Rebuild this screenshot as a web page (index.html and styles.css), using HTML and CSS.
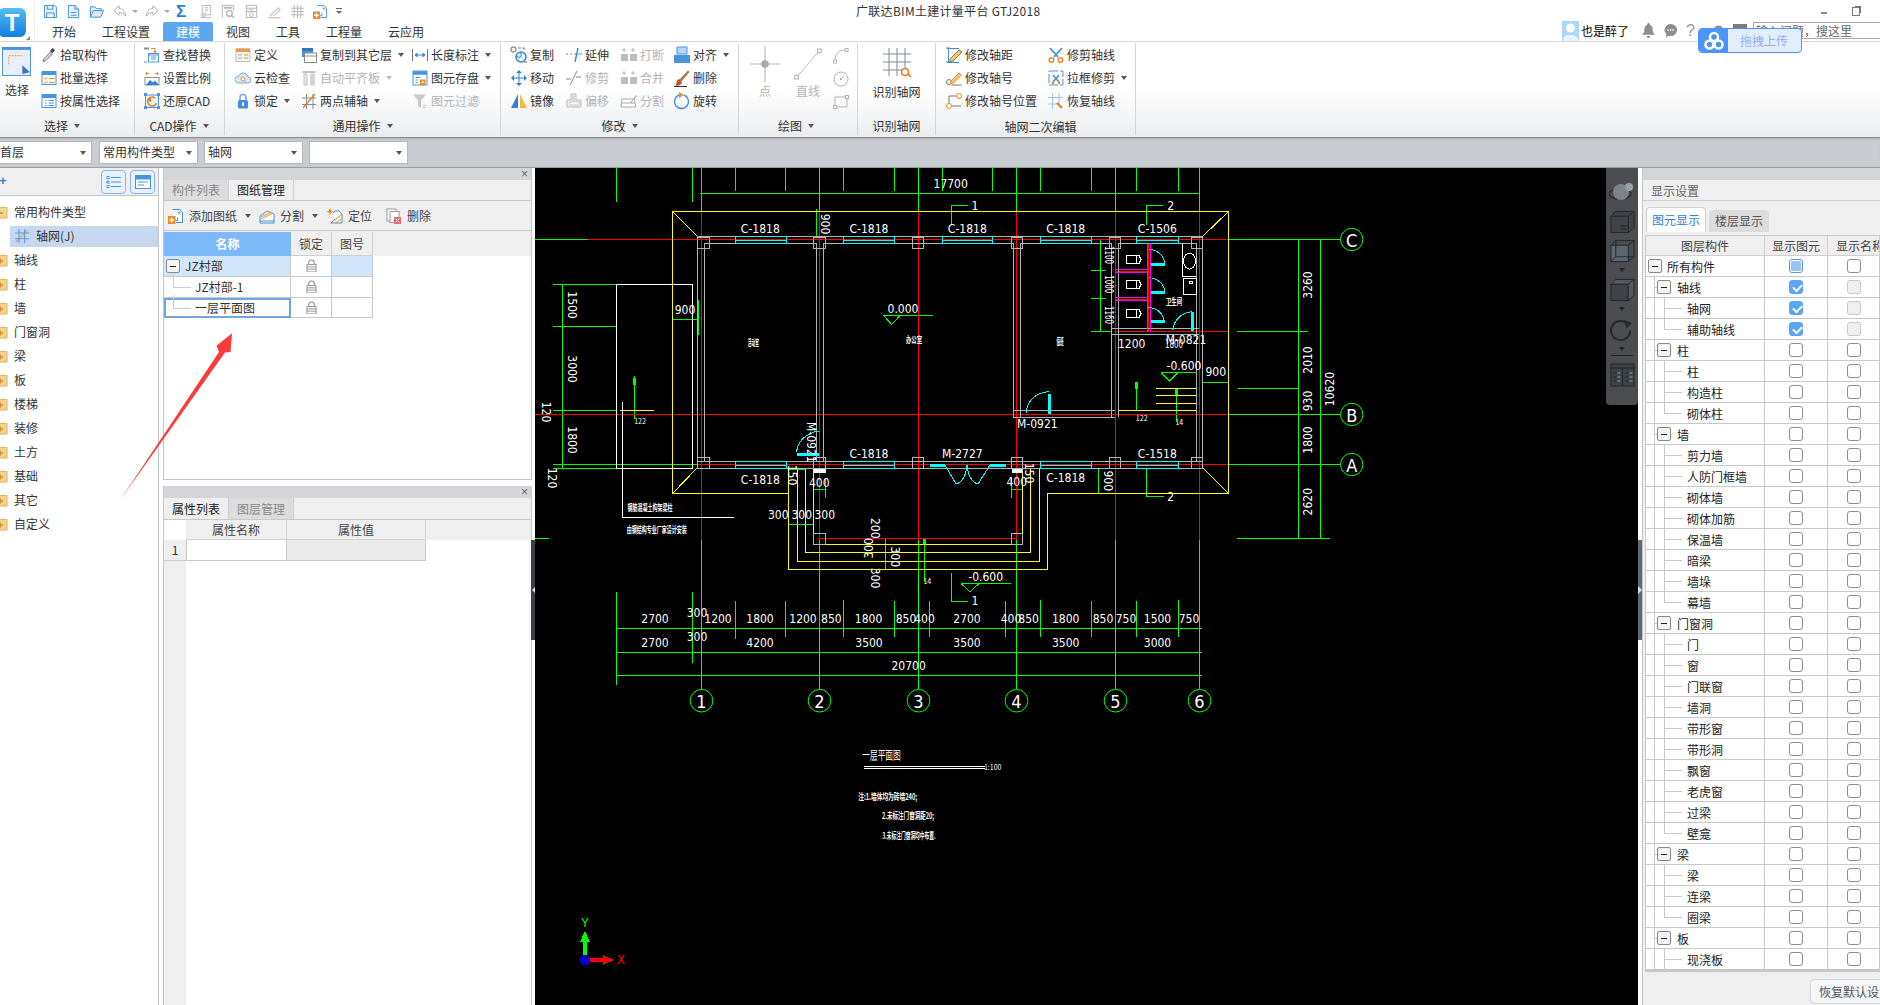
FILE: index.html
```html
<!DOCTYPE html>
<html lang="zh-CN">
<head>
<meta charset="utf-8">
<title>广联达BIM土建计量平台 GTJ2018</title>
<link rel="stylesheet" href="styles.css">
</head>
<body>
<svg class="sprite" aria-hidden="true">
<symbol id="save" viewBox="0 0 16 16"><path d="M1.5 1.5h11l2 2v11h-13z" fill="#e6f1fb" stroke="#3f8fd8"/><path d="M4.5 1.5v4h6v-4M4 14.5v-5h8v5" fill="none" stroke="#3f8fd8"/></symbol>
<symbol id="doc" viewBox="0 0 16 16"><path d="M2.500 1.500h7l4 4v9h-11z" fill="#e6f1fb" stroke="#3f8fd8"/><path d="M9.500 1.500v4h4M5 9h6M5 12h6" fill="none" stroke="#3f8fd8"/></symbol>
<symbol id="open" viewBox="0 0 16 16"><path d="M1.500 14V3h5l1.500 2h5v2" fill="#e6f1fb" stroke="#3f8fd8"/><path d="M1.500 14l3-7h11l-3 7z" fill="#dcebf9" stroke="#3f8fd8"/></symbol>
<symbol id="undo" viewBox="0 0 16 16"><path d="M7 2L1.500 7 7 12V9c3 0 5 1 7 4 0-5-3-8-7-8.500z" fill="#fff" stroke="#a8a8a8"/></symbol>
<symbol id="redo" viewBox="0 0 16 16"><path d="M9 2l5.500 5L9 12V9c-3 0-5 1-7 4 0-5 3-8 7-8.500z" fill="#fff" stroke="#a8a8a8"/></symbol>
<symbol id="g1" viewBox="0 0 16 16"><path d="M2.500 14.500h11M4.500 14V1.500h9v10h-7" fill="none" stroke="#b5b5b5"/><path d="M7 4h4M7 6.500h4M7 9h2" stroke="#b5b5b5"/><circle cx="6" cy="12" r="2.500" fill="#ccc"/></symbol>
<symbol id="g2" viewBox="0 0 16 16"><path d="M1.500 14.500v-13h12v6" fill="none" stroke="#b5b5b5"/><path d="M3 4h9" stroke="#b5b5b5" stroke-width="2"/><circle cx="9" cy="10" r="3" fill="none" stroke="#b5b5b5" stroke-width="1.500"/><path d="M11 12l3 3" stroke="#b5b5b5" stroke-width="1.500"/></symbol>
<symbol id="g3" viewBox="0 0 16 16"><path d="M2.500 14.500v-13h11v13z" fill="none" stroke="#b5b5b5"/><path d="M2 4.500h12M2 8h12M5 6.200h5" stroke="#b5b5b5"/><circle cx="8" cy="11.500" r="2" fill="none" stroke="#b5b5b5"/></symbol>
<symbol id="g4" viewBox="0 0 16 16"><path d="M1.500 14.500h13M3 13l9-9 2 2-7 7" fill="none" stroke="#c4c4c4" stroke-width="1.200"/></symbol>
<symbol id="g5" viewBox="0 0 16 16"><path d="M1 4.500h14M1 8h14M1 11.500h14M4.500 1v14M8 1v14M11.500 1v14" stroke="#b5b5b5"/></symbol>
<symbol id="addf" viewBox="0 0 16 16"><path d="M4.500 1.500h7l3 3v10H8" fill="#fff" stroke="#3f8fd8"/><path d="M10 4.500h2v2M6.500 12.500h3v-3" fill="none" stroke="#3f8fd8"/><rect x="0" y="8" width="7.500" height="8" fill="#ef8a22"/><path d="M3.750 9.500v5M1.300 12h5" stroke="#fff" stroke-width="1.400"/></symbol>
<symbol id="pick" viewBox="0 0 16 16"><path d="M2 14.500l1-3 6-6 2 2-6 6z" fill="#d8d8d8" stroke="#777"/><path d="M9 4l2-2.500c1-1 3.500 1.500 2.500 2.500L11 6.500z" fill="#4b4b4b"/></symbol>
<symbol id="batch" viewBox="0 0 16 16"><rect x="1" y="1.500" width="14" height="13" fill="#fff" stroke="#4a93df"/><path d="M1 3.500h14" stroke="#4a93df" stroke-width="3"/><path d="M3 8l1.200 1.200L6.500 7M3 12l1.200 1.200L6.500 11" fill="none" stroke="#ef8a22"/><path d="M8 8.500h5.500M8 12.500h5.500" stroke="#ef8a22"/></symbol>
<symbol id="attr" viewBox="0 0 16 16"><rect x="1" y="1.500" width="14" height="13" fill="#fff" stroke="#4a93df"/><path d="M1 3.500h14" stroke="#4a93df" stroke-width="3"/><path d="M4 7.500h1.500M4 10h1.500M4 12.500h1.500M7.500 7.500H13M7.500 10H13M7.500 12.500H13" stroke="#4a93df"/></symbol>
<symbol id="find" viewBox="0 0 16 16"><path d="M0 1.500h5" stroke="#8c8c8c" stroke-width="2"/><path d="M7 1.500h4v3" fill="none" stroke="#ef8a22"/><path d="M11 6.500L9 4h4z" fill="#ef8a22"/><rect x="4.500" y="6.500" width="10" height="8.500" fill="#fff" stroke="#4a93df"/><path d="M4.500 8h10M7 10h5M7 12h5" stroke="#4a93df"/><path d="M0 15h3" stroke="#8c8c8c"/></symbol>
<symbol id="scale" viewBox="0 0 16 16"><path d="M1 3.500l2-2v4zM15 3.500l-2-2v4z" fill="#ef8a22"/><path d="M3 3.500h2M11 3.500h2" stroke="#ef8a22"/><rect x="1" y="7.500" width="14" height="7.500" fill="#fff" stroke="#8c8c8c"/><path d="M2 15l4-5 3 2.500 2-2 4 4.500z" fill="#2f82d6"/></symbol>
<symbol id="restore" viewBox="0 0 16 16"><rect x="1.500" y="2" width="13" height="12.500" fill="#eaf3fc" stroke="#4a93df"/><path d="M0 0h3v3H0zM13 0h3v3h-3zM0 13h3v3H0zM13 13h3v3h-3z" fill="#4a93df"/><path d="M11 5a4.500 4.500 0 1 0 1.500 5" fill="none" stroke="#e9761a" stroke-width="1.500"/><path d="M3.500 7l3.500-3v5z" fill="#e9761a"/></symbol>
<symbol id="define" viewBox="0 0 16 16"><rect x="1" y="1.500" width="14" height="13" fill="#f3f3f3" stroke="#c2c2c2"/><path d="M1 3.500h14" stroke="#ef9a3c" stroke-width="3"/><path d="M3 8h4M3 11h4" stroke="#a7a7a7"/><path d="M9 8h4M9 11h4" stroke="#ef8a22"/></symbol>
<symbol id="cloud" viewBox="0 0 16 16"><path d="M4 13a3.500 3.500 0 0 1-.5-7 5 5 0 0 1 9.500 1 3 3 0 0 1 0 6z" fill="#dbeafa" stroke="#73aee8"/><circle cx="8" cy="9" r="2" fill="#fff" stroke="#ef8a22"/><path d="M9.500 10.500l2 2" stroke="#ef8a22"/></symbol>
<symbol id="lock" viewBox="0 0 16 16"><path d="M5 7V4.500a3 3 0 0 1 6 0V7" fill="none" stroke="#7aa9de" stroke-width="1.500"/><rect x="3" y="7" width="10" height="8.500" rx="1.500" fill="#3d8ee0"/><rect x="7" y="9.500" width="2" height="3.500" fill="#fff"/></symbol>
<symbol id="cfloor" viewBox="0 0 16 16"><rect x="1" y="1" width="11" height="9" fill="#4a93df"/><rect x="1" y="1" width="11" height="3" fill="#2f77c4"/><rect x="3.500" y="6" width="12" height="9.500" fill="#fff" stroke="#8c8c8c"/><path d="M3.500 9h12" stroke="#8c8c8c"/></symbol>
<symbol id="flat" viewBox="0 0 16 16"><path d="M1.500 2h13" stroke="#c4c4c4" stroke-width="2"/><rect x="3" y="4" width="3" height="11" fill="#e8e8e8" stroke="#c4c4c4"/><rect x="9" y="3.500" width="5" height="12" fill="#d5d5d5"/></symbol>
<symbol id="twop" viewBox="0 0 16 16"><path d="M5.500 1v15M12 1v15M1 5h14M1 11.500h14" stroke="#8c8c8c"/><path d="M2 15L14 1" stroke="#e9761a" stroke-width="1.200"/></symbol>
<symbol id="lenm" viewBox="0 0 16 16"><path d="M.5 2v12M15.500 2v12" stroke="#777"/><path d="M3 8h10" stroke="#2f82d6"/><path d="M2.500 8l3-2.500v5zM13.500 8l-3-2.500v5z" fill="#2f82d6"/></symbol>
<symbol id="saveb" viewBox="0 0 16 16"><rect x="1" y="1" width="14" height="14" fill="#fff" stroke="#4a93df"/><path d="M1 3h14" stroke="#4a93df" stroke-width="3.500"/><path d="M3.500 7.500h5M3.500 10h2M3.500 12.500h2" stroke="#4a93df"/><rect x="8" y="9.500" width="5.500" height="5.500" fill="#ef8a22"/><rect x="9.500" y="11.500" width="2.500" height="1.500" fill="#fff"/></symbol>
<symbol id="filt" viewBox="0 0 16 16"><path d="M1 1.500h13L9 7.500V15l-3-2V7.500z" fill="#c9c9c9"/><path d="M11 12.500h3M11 14.500h3" stroke="#c9c9c9"/></symbol>
<symbol id="copy" viewBox="0 0 18 18"><rect x="1" y="1" width="5" height="5" rx="2" fill="#fff" stroke="#666"/><path d="M8 2h3M12 2h2v2" fill="none" stroke="#888" stroke-width="1.200"/><circle cx="11" cy="11" r="5" fill="#fff" stroke="#2f82d6" stroke-width="1.500"/><circle cx="9" cy="9" r="2.500" fill="#cfe3f8" stroke="#2f82d6"/><path d="M14 16h3" stroke="#666"/></symbol>
<symbol id="extend" viewBox="0 0 18 18"><path d="M1 8h2M5 8h2M9 8h2" stroke="#888"/><path d="M13 2l-3 14" stroke="#2f82d6" stroke-width="1.300"/><path d="M13 8h4" stroke="#888"/></symbol>
<symbol id="brk" viewBox="0 0 18 18"><path d="M4 2v4M2 4h4M13 2v4M11 4h4" stroke="#bbb"/><rect x="1" y="8" width="7" height="7" fill="#bdbdbd"/><rect x="10" y="8" width="7" height="7" fill="#bdbdbd"/></symbol>
<symbol id="move" viewBox="0 0 18 18"><path d="M9 1l3 3H6zM9 17l-3-3h6zM1 9l3-3v6zM17 9l-3 3V6z" fill="#2f82d6"/><path d="M9 3v12M3 9h12" stroke="#2f82d6"/></symbol>
<symbol id="trim" viewBox="0 0 18 18"><path d="M1 10h5M11 8h5" stroke="#888"/><path d="M5 16L12 2" stroke="#888"/></symbol>
<symbol id="mir" viewBox="0 0 18 18"><path d="M8 2v14H1z" fill="#2f82d6"/><path d="M10 2v14h7z" fill="#f5b93a"/></symbol>
<symbol id="offs" viewBox="0 0 18 18"><path d="M6 2h5v6h5v7H2V8h4z" fill="#eee" stroke="#bbb"/><path d="M8 4h1v6h5v3H5v-3h3z" fill="#fff" stroke="#c8c8c8"/></symbol>
<symbol id="splt" viewBox="0 0 18 18"><path d="M1 15l1-8h12l2 8z" fill="#fff" stroke="#aaa"/><path d="M1 11h14" stroke="#aaa"/><path d="M10 11l6-8 1 1-6 7z" fill="#aaa"/></symbol>
<symbol id="algn" viewBox="0 0 18 18"><rect x="4" y="1" width="10" height="7" fill="#b9d6f5" stroke="#4a93df"/><rect x="1" y="9" width="16" height="8" fill="#4a93df"/></symbol>
<symbol id="del" viewBox="0 0 18 18"><path d="M6 11L15 1.500l1.500 1.500L8 13z" fill="#a9783a"/><path d="M2 17c2-1 1-6 4-7l3 4c-1 2-4 3-7 3z" fill="#c4502a"/><path d="M1 17.500h13" stroke="#333"/></symbol>
<symbol id="rot" viewBox="0 0 18 18"><path d="M11 3a7 7 0 1 1-5 0" fill="none" stroke="#3f8fd8" stroke-width="1.400"/><path d="M6 0l5 3-5 3z" fill="#ef8a22"/></symbol>
<symbol id="pt" viewBox="0 0 30 36"><path d="M15 0v36M0 18h30" stroke="#b3b3b3"/><circle cx="15" cy="18" r="3.800" fill="#a8a8a8"/></symbol>
<symbol id="ln" viewBox="0 0 32 36"><rect x="2" y="30" width="4" height="4" fill="#fff" stroke="#aaa"/><rect x="26" y="2" width="4" height="4" fill="#fff" stroke="#aaa"/><path d="M5 31L27 5" stroke="#b3b3b3"/></symbol>
<symbol id="arc" viewBox="0 0 16 16"><rect x=".5" y="12" width="3" height="3" fill="#fff" stroke="#b3b3b3"/><rect x="12" y=".5" width="3" height="3" fill="#fff" stroke="#b3b3b3"/><path d="M2 12C2 6 6 2 12 2" fill="none" stroke="#b3b3b3"/></symbol>
<symbol id="cir" viewBox="0 0 16 16"><circle cx="8" cy="8" r="7" fill="#fff" stroke="#b3b3b3"/><path d="M8 8l3-3" stroke="#b3b3b3"/><rect x="7" y="7" width="2" height="2" fill="#b3b3b3"/></symbol>
<symbol id="rc" viewBox="0 0 16 16"><path d="M2 3h12v10H2z" fill="none" stroke="#b3b3b3"/><rect x=".5" y="11.500" width="3" height="3" fill="#fff" stroke="#b3b3b3"/><rect x="12.500" y="1.500" width="3" height="3" fill="#fff" stroke="#b3b3b3"/></symbol>
<symbol id="gridi" viewBox="0 0 28 30"><path d="M6 0v28M14 0v28M22 0v24M0 6h28M0 14h28M0 22h20" stroke="#7d8891"/><circle cx="22" cy="24" r="3.500" fill="#fff" stroke="#e9761a" stroke-width="1.500"/><path d="M25 26l3 3" stroke="#e9761a" stroke-width="1.500"/></symbol>
<symbol id="axd" viewBox="0 0 16 16"><path d="M1 1.500h12M1 15.500h12M2.500 1.500v14M0 1h4M0 15h4" fill="none" stroke="#3f8fd8"/><path d="M4 12l9-9 3 2-9 9-3 1z" fill="#f5c979" stroke="#9b6f2b"/></symbol>
<symbol id="axn" viewBox="0 0 16 16"><circle cx="3" cy="12" r="2.500" fill="#fff" stroke="#777"/><path d="M5.500 15h10" stroke="#777"/><path d="M5 11l8-8 2.500 2-8 8-3 1z" fill="#f5c979" stroke="#ef8a22"/></symbol>
<symbol id="axp" viewBox="0 0 16 16"><path d="M3 3h12M3 3v9M3 13h12" stroke="#777" fill="none"/><circle cx="3" cy="13" r="2.500" fill="#fff" stroke="#ef8a22"/><circle cx="13" cy="3" r="2.500" fill="#fff" stroke="#ef8a22"/></symbol>
<symbol id="scis" viewBox="0 0 16 16"><path d="M2 1l8 9M14 1l-8 9" stroke="#3f8fd8" stroke-width="1.800"/><circle cx="3.500" cy="13" r="2.300" fill="none" stroke="#ef8a22" stroke-width="1.400"/><circle cx="12.500" cy="13" r="2.300" fill="none" stroke="#ef8a22" stroke-width="1.400"/></symbol>
<symbol id="bxt" viewBox="0 0 16 16"><rect x="1" y="1" width="14" height="14" fill="#fff" stroke="#4a93df" stroke-dasharray="9 2"/><path d="M5 5l6 7M11 5l-6 7" stroke="#3f8fd8" stroke-width="1.500"/><circle cx="5" cy="13" r="1.300" fill="#ef8a22"/><circle cx="11" cy="13" r="1.300" fill="#ef8a22"/></symbol>
<symbol id="rax" viewBox="0 0 16 16"><path d="M4.500 0v16M11 0v12M0 4.500h15M0 11h9" stroke="#9ec3ea"/><path d="M9 10l5 5" stroke="#e9761a" stroke-width="2"/></symbol>
<symbol id="fold" viewBox="0 0 16 16"><path d="M1 2h6l2 1.500h6V14H1z" fill="#f6d38a" stroke="#dcb266"/><path d="M8 6v6M5 9h6" stroke="#c98f2d" stroke-width="1.500"/></symbol>
<symbol id="foldo" viewBox="0 0 16 16"><path d="M1 2h6l2 1.500h6V14H1z" fill="#f6d38a" stroke="#dcb266"/><path d="M5 9h6" stroke="#c98f2d" stroke-width="1.500"/></symbol>
<symbol id="split" viewBox="0 0 16 16"><path d="M1 15V8l7-5 7 3v9z" fill="#fff" stroke="#3f8fd8"/><path d="M2 11l12-6M2 9l10-5" stroke="#ef8a22"/><path d="M1 13h14" stroke="#3f8fd8"/></symbol>
<symbol id="loc" viewBox="0 0 16 16"><path d="M6 5l2-2h4l3 3v9H4l4-4" fill="#fff" stroke="#3f8fd8"/><path d="M3 0l1 2.500L6.500 3.500 4 4.500 3 7 2 4.500-.5 3.500 2 2.500z" fill="#ef8a22"/><path d="M5 14l9-7M9 15l5-4" stroke="#ef8a22"/></symbol>
<symbol id="rm" viewBox="0 0 16 16"><rect x="1" y="1" width="9" height="12" fill="#fff" stroke="#9a9a9a"/><rect x="4" y="3.500" width="9" height="11" fill="#fff" stroke="#9a9a9a"/><rect x="8" y="9" width="7" height="7" fill="#e46a6a"/><path d="M9.500 10.500l4 4M13.500 10.500l-4 4" stroke="#fff"/></symbol>
<symbol id="pad" viewBox="0 0 12 14"><path d="M3 6V4a3 3 0 0 1 6 0v2" fill="none" stroke="#8f8f8f" stroke-width="1.200"/><rect x="1" y="6" width="10" height="8" fill="#fff" stroke="#8f8f8f"/><path d="M1 8.500h10M1 11h10" stroke="#8f8f8f"/></symbol>
</svg>

<header class="titlebar">
  <div class="logo-col"><div class="logo">T</div><i class="logo-corner"></i></div>
  <div class="title-rows">
    <div class="quick">
      <div class="qicons">
        <svg class="q" ><use href="#save"/></svg>
        <svg class="q"><use href="#doc"/></svg>
        <svg class="q"><use href="#open"/></svg>
        <svg class="q q-wide"><use href="#undo"/></svg><i class="qc"></i>
        <svg class="q q-wide"><use href="#redo"/></svg><i class="qc"></i>
        <span class="sigma">Σ</span>
        <svg class="q"><use href="#g1"/></svg>
        <svg class="q"><use href="#g2"/></svg>
        <svg class="q"><use href="#g3"/></svg>
        <svg class="q"><use href="#g4"/></svg>
        <svg class="q"><use href="#g5"/></svg>
        <svg class="q"><use href="#addf"/></svg>
        <span class="qmore"></span>
      </div>
      <div class="apptitle">广联达BIM土建计量平台 GTJ2018</div>
      <div class="winctl"><i class="w-min"></i><i class="w-res"></i></div>
    </div>
    <div class="tabrow">
      <nav class="tabs">
        <span class="tab">开始</span><span class="tab">工程设置</span><span class="tab on">建模</span><span class="tab">视图</span><span class="tab">工具</span><span class="tab">工程量</span><span class="tab">云应用</span>
      </nav>
      <div class="userbar">
        <svg class="avatar" viewBox="0 0 17 20"><rect width="17" height="20" fill="#a9d6fb"/><circle cx="8.500" cy="7" r="4.500" fill="#fff"/><path d="M1 20c0-5 3-6 7.500-6s7.500 1 7.500 6z" fill="#e8f5ff"/></svg>
        <span class="uname">也是醉了</span>
        <svg class="ub" viewBox="0 0 14 16"><path d="M7 0a1.500 1.500 0 0 1 1.500 2C11 3 11.500 5 11.500 8c0 2 1 3 2.500 4.500H0C1.500 11 2.500 10 2.500 8c0-3 .5-5 3-6A1.500 1.500 0 0 1 7 0zM5 14h4a2 2 0 0 1-4 0z" fill="#8e8e8e"/></svg>
        <svg class="ub" viewBox="0 0 14 16"><path d="M7 1a7 6.500 0 1 1-2 12.700L2 15.500l.6-3.500A7 6.500 0 0 1 7 1z" fill="#8e8e8e"/><path d="M3.500 7.500h1.500M6.300 7.500h1.500M9 7.500h1.500" stroke="#fff" stroke-width="1.500"/></svg>
        <span class="qm">?</span>
        <svg class="ub ub-gear" viewBox="0 0 14 16"><circle cx="7" cy="8" r="5.500" fill="#8e8e8e"/><circle cx="7" cy="8" r="2" fill="#fff"/></svg>
        <i class="ub-sq"></i>
        <div class="search">输入问题，搜这里</div>
      </div>
    </div>
  </div>
</header>

<div class="upload">
  <div class="up-logo"><svg viewBox="0 0 20 20" width="20" height="20"><circle cx="10" cy="6" r="4" fill="none" stroke="#fff" stroke-width="2.600"/><circle cx="5.500" cy="13.500" r="4" fill="none" stroke="#fff" stroke-width="2.600"/><circle cx="14.500" cy="13.500" r="4" fill="none" stroke="#fff" stroke-width="2.600"/></svg></div>
  <div class="up-text">拖拽上传</div>
</div>

<section class="ribbon">
  <div class="grp g-sel">
    <div class="gbody">
      <div class="bigbtn"><svg class="bigsel" viewBox="0 0 30 30"><rect x=".5" y=".5" width="29" height="29" fill="#e8eff8" stroke="#4a93df"/><rect x="0" y="0" width="30" height="3" fill="#4a93df"/><path d="M7 18V9h15" fill="none" stroke="#ef9a3c" stroke-dasharray="2 1"/><path d="M21 19l8 7-8 2z" fill="#3a78b8"/></svg><span>选择</span></div>
      <div class="col">
        <div class="it"><svg class="ic"><use href="#pick"/></svg>拾取构件</div>
        <div class="it"><svg class="ic"><use href="#batch"/></svg>批量选择</div>
        <div class="it"><svg class="ic"><use href="#attr"/></svg>按属性选择</div>
      </div>
    </div>
    <div class="glabel">选择<i class="cr"></i></div>
  </div>
  <div class="grp g-cad">
    <div class="gbody">
      <div class="col">
        <div class="it"><svg class="ic"><use href="#find"/></svg>查找替换</div>
        <div class="it"><svg class="ic"><use href="#scale"/></svg>设置比例</div>
        <div class="it"><svg class="ic"><use href="#restore"/></svg>还原CAD</div>
      </div>
    </div>
    <div class="glabel">CAD操作<i class="cr"></i></div>
  </div>
  <div class="grp g-gen">
    <div class="gbody">
      <div class="col c66">
        <div class="it"><svg class="ic"><use href="#define"/></svg>定义</div>
        <div class="it"><svg class="ic"><use href="#cloud"/></svg>云检查</div>
        <div class="it"><svg class="ic"><use href="#lock"/></svg>锁定<i class="cr"></i></div>
      </div>
      <div class="col c111">
        <div class="it"><svg class="ic"><use href="#cfloor"/></svg>复制到其它层<i class="cr"></i></div>
        <div class="it off"><svg class="ic"><use href="#flat"/></svg>自动平齐板<i class="cr"></i></div>
        <div class="it"><svg class="ic"><use href="#twop"/></svg>两点辅轴<i class="cr"></i></div>
      </div>
      <div class="col">
        <div class="it"><svg class="ic"><use href="#lenm"/></svg>长度标注<i class="cr"></i></div>
        <div class="it"><svg class="ic"><use href="#saveb"/></svg>图元存盘<i class="cr"></i></div>
        <div class="it off"><svg class="ic"><use href="#filt"/></svg>图元过滤</div>
      </div>
    </div>
    <div class="glabel">通用操作<i class="cr"></i></div>
  </div>
  <div class="grp g-mod">
    <div class="gbody">
      <div class="col c55">
        <div class="it i18"><svg class="ic"><use href="#copy"/></svg>复制</div>
        <div class="it i18"><svg class="ic"><use href="#move"/></svg>移动</div>
        <div class="it i18"><svg class="ic"><use href="#mir"/></svg>镜像</div>
      </div>
      <div class="col c55">
        <div class="it i18"><svg class="ic"><use href="#extend"/></svg>延伸</div>
        <div class="it i18 off"><svg class="ic"><use href="#trim"/></svg>修剪</div>
        <div class="it i18 off"><svg class="ic"><use href="#offs"/></svg>偏移</div>
      </div>
      <div class="col c53">
        <div class="it i18 off"><svg class="ic"><use href="#brk"/></svg>打断</div>
        <div class="it i18 off"><svg class="ic"><use href="#brk"/></svg>合并</div>
        <div class="it i18 off"><svg class="ic"><use href="#splt"/></svg>分割</div>
      </div>
      <div class="col">
        <div class="it i18"><svg class="ic"><use href="#algn"/></svg>对齐<i class="cr"></i></div>
        <div class="it i18"><svg class="ic"><use href="#del"/></svg>删除</div>
        <div class="it i18"><svg class="ic"><use href="#rot"/></svg>旋转</div>
      </div>
    </div>
    <div class="glabel lb-mod">修改<i class="cr"></i></div>
  </div>
  <div class="grp g-draw">
    <div class="gbody">
      <div class="bigd d-pt off"><svg class="d1"><use href="#pt"/></svg>点</div>
      <div class="bigd d-ln off"><svg class="d1"><use href="#ln"/></svg>直线</div>
      <div class="smalld"><svg class="ic"><use href="#arc"/></svg><svg class="ic"><use href="#cir"/></svg><svg class="ic"><use href="#rc"/></svg></div>
    </div>
    <div class="glabel">绘图<i class="cr"></i></div>
  </div>
  <div class="grp g-grid">
    <div class="gbody"><div class="bigd d-grid"><svg class="d2"><use href="#gridi"/></svg>识别轴网</div></div>
    <div class="glabel">识别轴网</div>
  </div>
  <div class="grp g-axis">
    <div class="gbody">
      <div class="col c102">
        <div class="it"><svg class="ic"><use href="#axd"/></svg>修改轴距</div>
        <div class="it"><svg class="ic"><use href="#axn"/></svg>修改轴号</div>
        <div class="it"><svg class="ic"><use href="#axp"/></svg>修改轴号位置</div>
      </div>
      <div class="col">
        <div class="it"><svg class="ic"><use href="#scis"/></svg>修剪轴线</div>
        <div class="it"><svg class="ic"><use href="#bxt"/></svg>拉框修剪<i class="cr"></i></div>
        <div class="it"><svg class="ic"><use href="#rax"/></svg>恢复轴线</div>
      </div>
    </div>
    <div class="glabel lb-low">轴网二次编辑</div>
  </div>
</section>

<section class="combos">
  <div class="combo c1">首层<i class="cr"></i></div>
  <div class="combo">常用构件类型<i class="cr"></i></div>
  <div class="combo">轴网<i class="cr"></i></div>
  <div class="combo"><i class="cr"></i></div>
</section>

<main class="main">
  <aside class="left">
    <div class="ltool">
      <span class="lplus">+</span>
      <div class="lbtn"><svg viewBox="0 0 16 14" width="16" height="14"><path d="M5 2.500h10M5 7h10M5 11.500h10" stroke="#4a93df"/><rect x="1" y="1.500" width="2" height="2" fill="none" stroke="#4a93df"/><rect x="1" y="6" width="2" height="2" fill="none" stroke="#4a93df"/><rect x="1" y="10.500" width="2" height="2" fill="none" stroke="#4a93df"/></svg></div>
      <div class="lbtn"><svg viewBox="0 0 16 14" width="16" height="14"><rect x=".5" y=".5" width="15" height="13" fill="#fff" stroke="#4a93df"/><path d="M0 2.500h16" stroke="#4a93df" stroke-width="4"/><path d="M3 7h10M3 10h6" stroke="#4a93df"/></svg></div>
    </div>
    <div class="tree">
      <div class="ti"><svg class="fi"><use href="#foldo"/></svg>常用构件类型</div>
      <div class="ti sel"><svg class="ax" viewBox="0 0 16 16"><path d="M4.500 0v16M11 0v16M0 4.500h16M0 11h16" stroke="#4a93df"/><path d="M1 15L14 1" stroke="#e9761a"/></svg>轴网(J)</div>
      <div class="ti"><svg class="fi"><use href="#fold"/></svg>轴线</div>
      <div class="ti"><svg class="fi"><use href="#fold"/></svg>柱</div>
      <div class="ti"><svg class="fi"><use href="#fold"/></svg>墙</div>
      <div class="ti"><svg class="fi"><use href="#fold"/></svg>门窗洞</div>
      <div class="ti"><svg class="fi"><use href="#fold"/></svg>梁</div>
      <div class="ti"><svg class="fi"><use href="#fold"/></svg>板</div>
      <div class="ti"><svg class="fi"><use href="#fold"/></svg>楼梯</div>
      <div class="ti"><svg class="fi"><use href="#fold"/></svg>装修</div>
      <div class="ti"><svg class="fi"><use href="#fold"/></svg>土方</div>
      <div class="ti"><svg class="fi"><use href="#fold"/></svg>基础</div>
      <div class="ti"><svg class="fi"><use href="#fold"/></svg>其它</div>
      <div class="ti"><svg class="fi"><use href="#fold"/></svg>自定义</div>
    </div>
  </aside>

  <div class="mid">
    <section class="pane p-top">
      <div class="phead"><span class="x">×</span></div>
      <div class="ptabs"><span class="ptab dim">构件列表</span><span class="ptab act">图纸管理</span></div>
      <div class="ptool">
        <span class="pt t1"><svg class="ic"><use href="#addf"/></svg>添加图纸<i class="cr"></i></span>
        <span class="pt t2"><svg class="ic"><use href="#split"/></svg>分割<i class="cr"></i></span>
        <span class="pt t3"><svg class="ic"><use href="#loc"/></svg>定位</span>
        <span class="pt"><svg class="ic"><use href="#rm"/></svg>删除</span>
      </div>
      <div class="dwg-head"><span class="dh blue">名称</span><span class="dh">锁定</span><span class="dh">图号</span></div>
      <div class="dwg-row rsel"><span class="dc dn"><i class="box"></i>JZ村部</span><span class="dc lockc"><svg class="pad"><use href="#pad"/></svg></span><span class="dc"></span></div>
      <div class="dwg-row"><span class="dc dn ch"><i class="g-h"></i>JZ村部-1</span><span class="dc lockc"><svg class="pad"><use href="#pad"/></svg></span><span class="dc"></span></div>
      <div class="dwg-row"><span class="dc dn ch last cur"><i class="g-h"></i>一层平面图</span><span class="dc lockc"><svg class="pad"><use href="#pad"/></svg></span><span class="dc"></span></div>
    </section>
    <section class="pane p-bot">
      <div class="phead"><span class="x">×</span></div>
      <div class="ptabs tb2"><span class="ptab act">属性列表</span><span class="ptab dim">图层管理</span></div>
      <div class="prop-body">
        <div class="prop-num"><span class="pn-top"></span><span class="pn-one">1</span></div>
        <div class="prop-cols">
          <div class="prop-h"><span>属性名称</span><span>属性值</span></div>
          <div class="prop-r"><span></span><span></span></div>
        </div>
      </div>
    </section>
  </div>
  <i class="handle hl"></i>

  <div class="canvas">
    <svg class="cad" viewBox="535 168 1103 837" width="1103" height="837">
      <path class="g" d="M616.500 168V202M692.500 168V202M735.500 168V191M785.500 168V191M843.500 168V191M894.500 168V191M942.500 168V191M992.500 168V191M1040.500 168V191M1091.500 168V191M1136.500 168V191M1178.500 168V191
      M701.500 168V212M819.500 168V212M918.500 168V212M1016.500 168V212M1115.500 168V212M1199.500 168V212
      M701.500 540V689M819.500 540V689M918.500 540V689M1016.500 540V689M1115.500 540V689M1199.500 540V689
      M700 193.500H1200
      M535 239.500H588M1228 239.500H1340M1228 414.500H1340M1228 464.500H1340M553 464.500H697
      M553 284.500H617M553 326.500H617M553 410.500H617M553 468.500H622M562.500 284V469M535 538.500H549
      M616.500 591.700V685M692.500 591.700V663M735.500 601V639M785.500 601V637M843.500 600V637M894.500 601V637M929.500 601V637M1005.500 601V637M1040.500 600V637M1091.500 601V637M1136.500 601V637M1178.500 600V637
      M616 628.500H1202M616 652.500H1202M616 675.500H1202
      M816.500 209V237M810 211.500H827M808 236.500H826
      M672.500 319.500H699M698.500 300V335M672.500 320V343
      M1202.500 362V392M1202.500 382.500H1228M1228.500 362V392
      M1098.500 468V494M1090 493.500H1106M1090 468.500H1106
      M1100.500 239V331M1090 239.500H1106M1091 270.500H1106M1091 298.500H1106M1091 331.500H1112
      M1298.500 239V538.500M1320.500 239V538.500M1237 331.500H1308M1238 388.500H1298M1237 538.500H1330
      M788 524.500H814M788.500 513V536M797.500 513V536M805.500 513V536M813.500 513V536
      M885.500 538V570M860 538.500H909M885 544.500H909M885 552.500H909M885 561.500H909M885 569.500H909
      M788 469.500H805M797 469V475M805 469V478
      M813.500 478V498M825.500 478V498M813 489.500H826M1011.500 478V498M1022.500 478V498M1011 489.500H1023
      M883.500 315.500H932.500L900 315.500L891.700 324.500L883.500 315.500
      M961 583.500H1011M979 583.500L970 591.700L961 583.500
      M951.500 573V601.500H968
      M1161 372.500H1196M1178 372.500L1169.500 381L1161 372.500
      M951.500 225V205.500H968M1146.500 225V205.500H1163M1146.500 469V496.500H1164
      M1136 381.500V411M1176 388V421.500M634.500 376V418.500M924.500 538V581.500"/>
      <path class="g th" d="M634.500 378V385M1136 381.500V388.500M1176 388V395M924.500 538V545"/>
      <path class="r" d="M701.500 212V540M819.500 212V540M918.500 212V540M1016.500 212V540M1115.500 212V540M1199.500 212V540
      M588 239.500H1228M535 414.500H1228M697 464.500H1228M818 538.500H918M918 538.500H1016.500M1115 331.500H1228M1115 271H1148M1115 299H1148M1148.500 243V332"/>
      <path class="y" d="M788.500 493.500H672.500V211.500H1228.500V493.500H1047.500V569.500H788.500V468M797.500 468V561.500H1039.500V468M805.500 468V552.500H1030.500V468M813.500 468V544.500H1022.500V468
      M672.500 211.500L697 236M1228.500 211.500L1203 236M672.500 493.500L697 468M1228.500 493.500L1203 468
      M1118 410.500H1196M1156 388.500H1196M1156 395.500H1196M1156 403.500H1196M620 410.500H654"/>
      <path class="w" d="M616.500 284.500H692.500V468.500H616.500ZM622.500 402V517.500H733.700"/>
      <path class="k" d="M697 236.500H1203M704 243.500H816M823 243.500H1013M1020.700 243.500H1111M1118.700 243.500H1196M697 461.500H1203M704 468.500H1196
      M697.500 236V468M704.500 243V461M816.500 243V461M823.500 243V461M1013.500 243V417M1020.500 243V417M1111.500 243V417M1118.500 243V417M1196.500 243V461M1202.500 236V468
      M1013 410.500H1115M1013 417.500H1115M1111 328.500H1199M1111 334.500H1199
      M697.500 237h12v11h-12zM813.500 237h12v11h-12zM912.500 237h11v11h-11zM1011.500 237h11v11h-11zM1109.500 237h11v11h-11zM1191.500 237h11v11h-11z
      M697.500 457.500h12v11h-12zM813.500 457.500h12v11h-12zM912.500 457.500h11v11h-11zM1011.500 457.500h11v11h-11zM1109.500 457.500h11v11h-11zM1191.500 457.500h11v11h-11z
      M813.500 533.500h12v11h-12zM1011.500 533.500h11v11h-11z"/>
      <path class="c" d="M735.500 236.500h51v7h-51zM735.500 240H786M843.500 236.500h51v7h-51zM843.500 240H894M942.500 236.500h50v7h-50zM942.500 240H992M1040.500 236.500h51v7h-51zM1040.500 240H1091M1136.500 236.500h42v7h-42zM1136.500 240H1178
      M735.500 461.500h51v7h-51zM735.500 465H786M843.500 461.500h51v7h-51zM843.500 465H894M1040.500 461.500h51v7h-51zM1040.500 465H1091M1136.500 461.500h42v7h-42zM1136.500 465H1178"/>
      <path class="c" fill="none" d="M945 465L956 484C963 482 966 476 967 465C968 476 971 482 978 484L990 465
      M818.700 431C806 433 797 442 796.700 452M1049.500 391.700C1036 392 1027 401 1026 413M1192.500 311.700C1182 312 1174 320 1172.700 330
      M1148.500 249C1158 250 1164 256 1165 264M1148.500 277.700C1158 278 1164 284 1165 292M1148.500 307.500C1157 308 1163 313 1164 321"/>
      <path class="c th" d="M930 465H945M990 465H1005.500M796.700 454.500H818.700M1049.500 394V414M1192.500 312V331M1150 264.500H1165M1150 292.500H1165M1150 321.500H1165"/>
      <path class="m" d="M1147.500 243V332M1150.500 243V332M1115 269.500H1147M1115 272.500H1147M1115 297.500H1147M1115 300.500H1147"/>
      <path class="w" d="M1126.500 255.500h9.500v8h-9.500zM1136 255.500h3l2 4-2 4h-3M1126.500 280.500h9.500v8h-9.500zM1136 280.500h3l2 4-2 4h-3M1126.500 309.500h9.500v8h-9.500zM1136 309.500h3l2 4-2 4h-3
      M1182.500 243.500V276.500H1196M1183.500 278.500H1196V294.500H1183.500Z"/>
      <ellipse class="w" cx="1189.500" cy="261" rx="6" ry="8"/>
      <path class="w" d="M1189 281h3v2h-3z"/>
      <path class="wf" d="M813.500 468.500h12v4.200h-12zM1011.500 468.500h11v4.200h-11z"/>
      <circle class="g" cx="1351.700" cy="239.500" r="11.200"/><circle class="g" cx="1351.700" cy="414.500" r="11.200"/><circle class="g" cx="1351.700" cy="464.500" r="11.200"/>
      <circle class="g" cx="701.500" cy="700.700" r="11.300"/><circle class="g" cx="819.500" cy="700.700" r="11.300"/><circle class="g" cx="918.500" cy="700.700" r="11.300"/><circle class="g" cx="1016.500" cy="700.700" r="11.300"/><circle class="g" cx="1115.500" cy="700.700" r="11.300"/><circle class="g" cx="1199.500" cy="700.700" r="11.300"/>
      <g class="bub">
        <text x="1351.700" y="240">C</text><text x="1351.700" y="415">B</text><text x="1351.700" y="465">A</text>
        <text x="701.500" y="701">1</text><text x="819.500" y="701">2</text><text x="918.500" y="701">3</text><text x="1016.500" y="701">4</text><text x="1115.500" y="701">5</text><text x="1199.500" y="701">6</text>
      </g>
      <g class="t">
        <text x="950.700" y="184">17700</text>
        <text x="975" y="206">1</text><text x="1170.700" y="206">2</text><text x="1170.700" y="497">2</text><text x="975" y="601">1</text>
        <text x="760.300" y="229">C-1818</text><text x="869" y="229">C-1818</text><text x="967.300" y="229">C-1818</text><text x="1065.700" y="229">C-1818</text><text x="1157.300" y="229">C-1506</text>
        <text x="760.300" y="480">C-1818</text><text x="869" y="454">C-1818</text><text x="962.300" y="454">M-2727</text><text x="1157.300" y="454">C-1518</text><text x="1065.700" y="478">C-1818</text>
        <text x="1037.300" y="424">M-0921</text><text x="1186" y="340">M-0821</text><text x="1174" y="344" textLength="18" lengthAdjust="spacingAndGlyphs">1800</text><text x="1131.700" y="344">1200</text>
        <text x="1215.700" y="372">900</text><text x="685" y="310">900</text><text x="903" y="309">0.000</text><text x="985.700" y="577">-0.600</text><text x="1184" y="366">-0.600</text>
        <text x="778.300" y="514.500">300</text><text x="801.700" y="514.500">300</text><text x="824.700" y="514.500">300</text>
        <text x="819.300" y="482.700">400</text><text x="1016.700" y="481.700">400</text>
        <text x="655" y="618.700">2700</text><text x="697" y="612.700">300</text><text x="718" y="618.700">1200</text><text x="760" y="618.700">1800</text><text x="803" y="618.700">1200</text><text x="831.400" y="618.700">850</text><text x="868.600" y="618.700">1800</text><text x="906" y="618.700">850</text><text x="924.500" y="618.700">400</text><text x="967" y="618.700">2700</text><text x="1011" y="618.700">400</text><text x="1028.600" y="618.700">850</text><text x="1065.700" y="618.700">1800</text><text x="1103" y="618.700">850</text><text x="1126" y="618.700">750</text><text x="1157.500" y="618.700">1500</text><text x="1189" y="618.700">750</text>
        <text x="655" y="643.300">2700</text><text x="697" y="637">300</text><text x="760" y="643.300">4200</text><text x="869" y="643.300">3500</text><text x="967" y="643.300">3500</text><text x="1065.700" y="643.300">3500</text><text x="1157.500" y="643.300">3000</text>
        <text x="908.600" y="665.700">20700</text>
        <text transform="translate(572 305) rotate(90)">1500</text><text transform="translate(572 369) rotate(90)">3000</text><text transform="translate(572 440) rotate(90)">1800</text>
        <text transform="translate(546 412) rotate(90)">120</text><text transform="translate(552 478) rotate(90)">120</text>
        <text transform="translate(825.300 224) rotate(90)">900</text><text transform="translate(1108.300 480.700) rotate(90)">900</text>
        <text transform="translate(1109.300 255) rotate(90)" textLength="18" lengthAdjust="spacingAndGlyphs">1100</text><text transform="translate(1109.300 284.300) rotate(90)" textLength="18" lengthAdjust="spacingAndGlyphs">1000</text><text transform="translate(1109.300 315) rotate(90)" textLength="18" lengthAdjust="spacingAndGlyphs">1160</text>
        <text transform="translate(811.300 442.300) rotate(90)">M-0921</text>
        <text transform="translate(791.700 475) rotate(90)">150</text><text transform="translate(1029 473) rotate(90)">150</text>
        <text transform="translate(875.300 528.300) rotate(90)">200</text><text transform="translate(868.700 548.300) rotate(-90)">300</text><text transform="translate(895 556.700) rotate(90)">300</text><text transform="translate(875.300 578) rotate(90)">300</text>
        <text transform="translate(1308.300 285) rotate(-90)">3260</text><text transform="translate(1308.300 360) rotate(-90)">2010</text><text transform="translate(1308.300 401) rotate(-90)">930</text><text transform="translate(1308.300 440) rotate(-90)">1800</text><text transform="translate(1308.300 501.700) rotate(-90)">2620</text><text transform="translate(1330 389) rotate(-90)">10620</text>
      </g>
      <g class="ts">
        <text class="bold" x="753.300" y="342.300" textLength="11" lengthAdjust="spacingAndGlyphs">活动室</text><text class="bold" x="914" y="339.300" textLength="16" lengthAdjust="spacingAndGlyphs">办公室</text><text class="bold" x="1060" y="341.700" textLength="7" lengthAdjust="spacingAndGlyphs">值班</text><text class="bold" x="1174" y="301.700" textLength="16" lengthAdjust="spacingAndGlyphs">卫生间</text>
        <text x="640" y="420.700">122</text><text x="1141.700" y="418.300">122</text><text x="1179.300" y="422.300">14</text><text x="927.300" y="581">14</text>
        <text x="992.700" y="767">1:100</text>
        <text x="650" y="507.700" class="bold" textLength="45" lengthAdjust="spacingAndGlyphs">钢筋混凝土构架梁柱</text>
        <text x="656.800" y="529" class="bold" textLength="60" lengthAdjust="spacingAndGlyphs">由钢结构专业厂家设计安装</text>
        <text x="887.700" y="796" class="bold" textLength="59" lengthAdjust="spacingAndGlyphs">注:1.墙体均为砖墙240;</text>
        <text x="908" y="815.700" class="bold" textLength="52" lengthAdjust="spacingAndGlyphs">2.未标注门窗洞距20;</text>
        <text x="909" y="835" class="bold" textLength="53" lengthAdjust="spacingAndGlyphs">3.未标注门窗洞均中布置.</text>
      </g>
      <text class="tt" x="881.500" y="754" textLength="38.600" lengthAdjust="spacingAndGlyphs">一层平面图</text>
      <path class="w" d="M864 766.500H984.500M864 768.500H984.500"/>
      <path class="fg" d="M583 960V942H580L585 931L590 942H587V960Z"/>
      <path class="fr" d="M585 958H603V955L614 960L603 965V962H585Z"/>
      <circle class="fb" cx="585" cy="960" r="5.500"/>
      <text class="lg" x="585" y="923">Y</text>
      <text class="lr" x="621" y="960">X</text>
    </svg>
    <div class="viewtools">
      <svg class="v1" viewBox="0 0 26 20"><ellipse cx="11" cy="12" rx="11" ry="5" fill="none" stroke="#2f3135" stroke-width="1.500"/><circle cx="12" cy="10" r="8" fill="#7e848b"/><circle cx="20" cy="5" r="4" fill="#9ca2a8"/></svg>
      <svg class="v2" viewBox="0 0 26 24"><path d="M1 6h18v17H1zM1 6l5-5h19v17l-6 5M19 6l6-5" fill="#3f434a" stroke="#24262a"/><text class="v3d" x="15" y="20">3D</text></svg>
      <svg class="v2" viewBox="0 0 26 24"><path d="M1 6h18v17H1z" fill="#5d6770" stroke="#24262a"/><path d="M6 1h19v17H6zM1 6l5-5M19 6l6-5M1 23l5-5M19 23l6-5" fill="none" stroke="#24262a"/></svg>
      <i class="vc"></i>
      <svg class="v2" viewBox="0 0 26 24"><path d="M1 6h18v17H1z" fill="#3f434a" stroke="#24262a"/><path d="M1 6l5-5h19v17l-6 5V6zM19 6l6-5" fill="#55585e" stroke="#24262a"/></svg>
      <i class="vc"></i>
      <svg class="v2 vrot" viewBox="0 0 24 24"><path d="M20 11A10 10 0 1 1 16 3" fill="none" stroke="#26282c" stroke-width="2"/><path d="M14 0l8 3-6 6z" fill="#26282c"/></svg>
      <i class="vc vc-end"></i>
      <i class="vdiv"></i>
      <svg class="v2" viewBox="0 0 24 24"><rect x=".5" y="1" width="23" height="22" fill="#3f434a" stroke="#24262a"/><path d="M0 5h24M12 5v18M3 10h3M3 14h3M3 18h3M15 10h3M15 14h3M15 18h3" stroke="#24262a"/><path d="M7 10h3M7 14h3M7 18h3M19 10h3M19 14h3M19 18h3" stroke="#9ca2a8"/></svg>
    </div>
  </div>
  <i class="handle hr"></i>

  <aside class="right">
    <div class="phead"></div>
    <div class="rtitle">显示设置</div>
    <div class="rtabs"><span class="rt on">图元显示</span><span class="rt">楼层显示</span></div>
    <div class="layers">
      <div class="lh"><span>图层构件</span><span>显示图元</span><span>显示名称</span></div>
      <div class="lr"><span class="n l0"><i class="box"></i>所有构件</span><span class="c"><i class="cb part"></i></span><span class="c"><i class="cb"></i></span></div>
      <div class="lr"><span class="n l1"><i class="box"></i>轴线</span><span class="c"><i class="cb on"></i></span><span class="c"><i class="cb dis"></i></span></div>
      <div class="lr"><span class="n l2">轴网</span><span class="c"><i class="cb on"></i></span><span class="c"><i class="cb dis"></i></span></div>
      <div class="lr"><span class="n l2 end">辅助轴线</span><span class="c"><i class="cb on"></i></span><span class="c"><i class="cb dis"></i></span></div>
      <div class="lr"><span class="n l1"><i class="box"></i>柱</span><span class="c"><i class="cb"></i></span><span class="c"><i class="cb"></i></span></div>
      <div class="lr"><span class="n l2">柱</span><span class="c"><i class="cb"></i></span><span class="c"><i class="cb"></i></span></div>
      <div class="lr"><span class="n l2">构造柱</span><span class="c"><i class="cb"></i></span><span class="c"><i class="cb"></i></span></div>
      <div class="lr"><span class="n l2 end">砌体柱</span><span class="c"><i class="cb"></i></span><span class="c"><i class="cb"></i></span></div>
      <div class="lr"><span class="n l1"><i class="box"></i>墙</span><span class="c"><i class="cb"></i></span><span class="c"><i class="cb"></i></span></div>
      <div class="lr"><span class="n l2">剪力墙</span><span class="c"><i class="cb"></i></span><span class="c"><i class="cb"></i></span></div>
      <div class="lr"><span class="n l2">人防门框墙</span><span class="c"><i class="cb"></i></span><span class="c"><i class="cb"></i></span></div>
      <div class="lr"><span class="n l2">砌体墙</span><span class="c"><i class="cb"></i></span><span class="c"><i class="cb"></i></span></div>
      <div class="lr"><span class="n l2">砌体加筋</span><span class="c"><i class="cb"></i></span><span class="c"><i class="cb"></i></span></div>
      <div class="lr"><span class="n l2">保温墙</span><span class="c"><i class="cb"></i></span><span class="c"><i class="cb"></i></span></div>
      <div class="lr"><span class="n l2">暗梁</span><span class="c"><i class="cb"></i></span><span class="c"><i class="cb"></i></span></div>
      <div class="lr"><span class="n l2">墙垛</span><span class="c"><i class="cb"></i></span><span class="c"><i class="cb"></i></span></div>
      <div class="lr"><span class="n l2 end">幕墙</span><span class="c"><i class="cb"></i></span><span class="c"><i class="cb"></i></span></div>
      <div class="lr"><span class="n l1"><i class="box"></i>门窗洞</span><span class="c"><i class="cb"></i></span><span class="c"><i class="cb"></i></span></div>
      <div class="lr"><span class="n l2">门</span><span class="c"><i class="cb"></i></span><span class="c"><i class="cb"></i></span></div>
      <div class="lr"><span class="n l2">窗</span><span class="c"><i class="cb"></i></span><span class="c"><i class="cb"></i></span></div>
      <div class="lr"><span class="n l2">门联窗</span><span class="c"><i class="cb"></i></span><span class="c"><i class="cb"></i></span></div>
      <div class="lr"><span class="n l2">墙洞</span><span class="c"><i class="cb"></i></span><span class="c"><i class="cb"></i></span></div>
      <div class="lr"><span class="n l2">带形窗</span><span class="c"><i class="cb"></i></span><span class="c"><i class="cb"></i></span></div>
      <div class="lr"><span class="n l2">带形洞</span><span class="c"><i class="cb"></i></span><span class="c"><i class="cb"></i></span></div>
      <div class="lr"><span class="n l2">飘窗</span><span class="c"><i class="cb"></i></span><span class="c"><i class="cb"></i></span></div>
      <div class="lr"><span class="n l2">老虎窗</span><span class="c"><i class="cb"></i></span><span class="c"><i class="cb"></i></span></div>
      <div class="lr"><span class="n l2">过梁</span><span class="c"><i class="cb"></i></span><span class="c"><i class="cb"></i></span></div>
      <div class="lr"><span class="n l2 end">壁龛</span><span class="c"><i class="cb"></i></span><span class="c"><i class="cb"></i></span></div>
      <div class="lr"><span class="n l1"><i class="box"></i>梁</span><span class="c"><i class="cb"></i></span><span class="c"><i class="cb"></i></span></div>
      <div class="lr"><span class="n l2">梁</span><span class="c"><i class="cb"></i></span><span class="c"><i class="cb"></i></span></div>
      <div class="lr"><span class="n l2">连梁</span><span class="c"><i class="cb"></i></span><span class="c"><i class="cb"></i></span></div>
      <div class="lr"><span class="n l2 end">圈梁</span><span class="c"><i class="cb"></i></span><span class="c"><i class="cb"></i></span></div>
      <div class="lr"><span class="n l1"><i class="box"></i>板</span><span class="c"><i class="cb"></i></span><span class="c"><i class="cb"></i></span></div>
      <div class="lr"><span class="n l2">现浇板</span><span class="c"><i class="cb"></i></span><span class="c"><i class="cb"></i></span></div>
    </div>
    <div class="rfoot"><span class="rbtn">恢复默认设置</span></div>
  </aside>
</main>

<svg class="arrow" viewBox="0 0 120 170" width="120" height="170" aria-hidden="true"><path d="M.7 166.300L99 19L96.600 12.700L112 .300L110.500 19L105 19.500Z" fill="#fb3a3a"/></svg>
</body>
</html>
```

FILE: styles.css
```css
* { box-sizing: border-box; }
html, body { margin: 0; height: 100%; }
body {
  width: 1880px; height: 1005px; overflow: hidden; position: relative;
  display: flex; flex-direction: column; background: #fff; color: #333;
  font: 12px/1 "Noto Sans CJK SC", "Liberation Sans", sans-serif;
}
i { display: block; font-style: normal; }
svg { display: block; flex: none; }
.sprite { width: 0; height: 0; position: absolute; }

/* title bar */
.titlebar { height: 41px; display: flex; flex: none; }
.logo-col { width: 35px; position: relative; border-right: 1px solid #eee; }
.logo {
  position: absolute; left: -2px; top: 8px; width: 28px; height: 29px; border-radius: 6px;
  background: linear-gradient(#58bcf5, #0f7fe0); color: #fff; font: bold 24px/29px "Liberation Sans", sans-serif; text-align: center;
}
.logo-corner { position: absolute; left: 26px; top: 36px; border: 2px solid transparent; border-right-color: #888; border-bottom-color: #888; }
.title-rows { flex: 1; min-width: 0; margin-left: 4px; }
.quick { height: 22px; display: flex; align-items: center; position: relative; }
.qicons { display: flex; align-items: center; width: 817px; padding-left: 4px; }
.q { width: 15px; height: 15px; margin-right: 8px; }
.q-wide { width: 16px; margin-right: 2px; }
.qc { border: 3px solid transparent; border-top: 3px solid #aaa; margin: 3px 6px 0 2px; }
.sigma { font: bold 17px/1 "Liberation Sans", sans-serif; color: #2b7fd1; width: 12px; margin: 0 10px 0 0; }
.qmore { width: 6px; height: 6px; border-top: 1px solid #666; position: relative; }
.qmore::after { content: ""; position: absolute; left: 0; top: 2px; border: 3px solid transparent; border-top: 3px solid #666; }
.apptitle { color: #333; width: 200px; white-space: nowrap; font-size: 12px; letter-spacing: .3px; }
.winctl { margin-left: auto; display: flex; align-items: center; gap: 25px; padding-right: 20px; }
.w-min { width: 6px; height: 2px; background: #888; margin-top: 4px; }
.w-res { width: 8px; height: 9px; border: 1.500px solid #777; background: #fff; box-shadow: 2px -2px 0 -1px #777; }
.tabrow { height: 19px; display: flex; }
.tabs { display: flex; }
.tab { padding: 0 13px; line-height: 19px; color: #333; white-space: nowrap; }
.tab.on { background: #5ca6f2; color: #fff; border-radius: 2px 2px 0 0; }
.userbar { margin-left: auto; display: flex; align-items: center; height: 17px; }
.avatar { width: 17px; height: 20px; margin-right: 2px; }
.uname { color: #000; width: 48px; margin-right: 13px; white-space: nowrap; }
.ub { width: 13px; height: 15px; margin-right: 9px; }
.qm { color: #999; font: 16px/1 "Liberation Sans", sans-serif; width: 10px; margin-right: 16px; }
.ub-gear { margin-right: 8px; }
.ub-sq { width: 14px; height: 14px; background: #7d7d7d; margin-right: 6px; }
.search { width: 127px; height: 17px; border: 1px solid #aaa; border-right: 0; color: #666; line-height: 15px; padding-left: 2px; white-space: nowrap; overflow: hidden; }

.upload {
  position: absolute; left: 1698px; top: 28px; width: 104px; height: 25px; display: flex; z-index: 4;
  background: #e3eefd; border: 1px solid #4a94fb; border-radius: 4px; overflow: hidden;
}
.up-logo { width: 29px; background: #4a94fb; display: flex; align-items: center; justify-content: center; }
.up-text { color: #90aff0; flex: 1; line-height: 23px; padding-left: 12px; }

/* ribbon */
.ribbon {
  height: 97px; flex: none; display: flex; border-top: 1px solid #d6d6d6; border-bottom: 1px solid #8f8f8f;
  background: linear-gradient(#fff 0, #fff 50%, #eaecee 100%);
}
.grp { display: flex; flex-direction: column; margin: 1px 0 2px; border-right: 1px solid #d3d5d8; flex: none; }
.g-sel { width: 135px; } .g-cad { width: 90px; padding-left: 9px; } .g-gen { width: 276px; padding-left: 10px; }
.g-mod { width: 238px; padding-left: 9px; } .g-draw { width: 119px; } .g-grid { width: 78px; } .g-axis { width: 200px; padding-left: 10px; }
.gbody { display: flex; height: 72px; }
.glabel { flex: 1; display: flex; align-items: center; justify-content: center; color: #333; padding-top: 1px; white-space: nowrap; }
.g-sel .glabel { padding-right: 10px; } .g-cad .glabel { padding-right: 10px; } .g-gen .glabel { padding-right: 10px; }
.lb-mod { padding-right: 9px; } .g-draw .glabel { padding-right: 4px; } .lb-low { padding-top: 3px; }
.col { display: flex; flex-direction: column; }
.c66 { width: 66px; } .c111 { width: 111px; } .c55 { width: 55px; } .c53 { width: 53px; } .c102 { width: 102px; }
.it { height: 23px; display: flex; align-items: center; white-space: nowrap; color: #333; }
.ic { width: 16px; height: 16px; margin-right: 3px; }
.i18 .ic { width: 18px; height: 18px; margin-right: 2px; }
.it.off, .bigd.off { color: #b4b4b4; }
.cr { border: 3px solid transparent; border-top: 4px solid #555; margin: 4px 0 0 6px; width: 0; height: 0; }
.it.off .cr { border-top-color: #bbb; }
.bigbtn { width: 41px; display: flex; flex-direction: column; padding-left: 2px; }
.bigsel { width: 29px; height: 29px; margin-top: 4px; }
.bigbtn span { width: 30px; text-align: center; margin-top: 8px; }
.bigd { display: flex; flex-direction: column; align-items: center; }
.d-pt { width: 30px; margin: 3px 0 0 11px; } .d-ln { width: 34px; margin: 3px 0 0 11px; }
.d1 { width: 30px; height: 36px; margin-bottom: 3px; }
.smalld { margin-left: 8px; display: flex; flex-direction: column; gap: 7px; padding-top: 5px; }
.d-grid { width: 78px; padding-top: 5px; }
.d2 { width: 28px; height: 30px; margin-bottom: 8px; }

/* combos */
.combos {
  height: 30px; flex: none; display: flex; gap: 6px; align-items: center; background: #c9ccd0;
  border-bottom: 1px solid #9b9da0; box-shadow: inset 0 2px 2px -1px #aeb0b3; padding-bottom: 1px;
}
.combo {
  width: 99px; height: 23px; background: #fff; border: 1px solid #b5b7ba; display: flex; align-items: center;
  padding: 0 5px 0 3px; font-size: 12px; color: #333;
}
.combo .cr { margin: 4px 0 0 auto; }
.combo.c1 { width: 92px; padding-left: 0; margin-right: 1px; border-left: 0; }

/* main */
.main { flex: 1; min-height: 0; display: flex; position: relative; }
.left { width: 159px; border-right: 1px solid #c4c4c4; flex: none; overflow: hidden; }
.ltool { height: 28px; background: #efefef; border-bottom: 1px solid #c8c8c8; display: flex; align-items: center; padding-right: 3px; gap: 4px; }
.lplus { color: #2f82d6; font: bold 13px/1 "Liberation Sans", sans-serif; margin-right: auto; margin-left: -1px; margin-top: -2px; }
.lbtn { width: 25px; height: 24px; border: 1px solid #82b8ee; border-radius: 4px; background: #eaf3fd; display: flex; align-items: center; justify-content: center; }
.tree { padding-top: 4px; }
.ti { height: 24px; display: flex; align-items: center; white-space: nowrap; margin-left: -8px; color: #333; }
.fi { width: 16px; height: 16px; margin-right: 6px; }
.ti.sel { margin-left: 10px; height: 21px; margin-top: 1.500px; margin-bottom: 1.500px; background: #c6d8ef; padding-left: 5px; }
.ax { width: 14px; height: 14px; margin-right: 7px; }

/* middle */
.mid { width: 369px; margin-left: 4px; flex: none; display: flex; flex-direction: column; }
.pane { display: flex; flex-direction: column; background: #fff; border-left: 1px solid #c4c4c4; border-right: 1px solid #c4c4c4; }
.p-top { height: 312px; border-bottom: 1px solid #c4c4c4; }
.p-bot { flex: 1; margin-top: 6px; border-bottom: 0; min-height: 0; }
.phead { height: 12px; background: #d4d5d8; display: flex; align-items: center; justify-content: flex-end; padding-right: 3px; flex: none; }
.x { color: #666; font: 12px/1 "Liberation Sans", sans-serif; }
.ptabs { height: 21px; display: flex; background: #efefef; border-bottom: 1px solid #c8c8c8; flex: none; }
.tb2 { height: 22px; }
.ptab { width: 65px; display: flex; align-items: center; justify-content: center; background: #efefef; border-right: 1px solid #cfcfcf; color: #222; }
.ptab.dim { background: #dcdcdc; color: #888; }
.ptool { height: 30px; background: #efefef; border-bottom: 1px solid #c8c8c8; display: flex; align-items: center; padding-left: 4px; color: #444; flex: none; }
.pt { display: flex; align-items: center; white-space: nowrap; }
.pt .ic { margin-right: 5px; }
.t1 { width: 91px; } .t2 { width: 68px; } .t3 { width: 59px; }
.pt .cr { margin-left: 8px; }
.dwg-head { height: 25px; background: #efefef; display: flex; flex: none; padding-top: 1px; }
.dh { width: 41px; border-right: 1px solid #cfcfcf; border-bottom: 1px solid #cfcfcf; display: flex; align-items: center; justify-content: center; color: #444; }
.dh.blue { width: 127px; background: #7db8f8; color: #fff; font-weight: 700; border: 0; }
.dwg-row { display: flex; height: 20.800px; flex: none; }
.dc { width: 41px; border-right: 1px solid #c8c8c8; border-bottom: 1px solid #c8c8c8; display: flex; align-items: center; justify-content: center; color: #333; position: relative; }
.rsel .dc { background: #d2e6fb; }
.rsel .lockc { background: #fff; }
.dn { width: 127px; justify-content: flex-start; padding-left: 21px; }
.ch { padding-left: 31px; }
.box { position: absolute; width: 14px; height: 14px; border: 1px solid #888; border-radius: 2px; background: #f4f4f4; }
.box::after { content: ""; position: absolute; left: 3px; top: 5.500px; width: 6px; height: 1px; background: #222; }
.dn .box { left: 2px; top: 3px; }
.cur { border: 2px solid #6fa8e0; padding-left: 29px; }
.g-h { position: absolute; left: 9px; top: 10px; width: 18px; height: 1px; background: #ccc; }
.g-h::before { content: ""; position: absolute; left: 0; bottom: 0; width: 1px; height: 14px; background: #ccc; }
.cur .g-h { left: 7px; top: 8px; }
.pad { width: 11px; height: 13px; }
.prop-body { flex: 1; display: flex; background: #fff; min-height: 0; }
.prop-num { width: 22px; background: #efefef; display: flex; flex-direction: column; }
.pn-top { height: 20px; background: #fff; }
.pn-one { height: 21px; display: flex; align-items: center; justify-content: center; color: #333; border-bottom: 1px solid #ccc; }
.prop-cols { flex: 1; }
.prop-h { height: 20px; display: flex; background: #efefef; }
.prop-h span { display: flex; align-items: center; justify-content: center; color: #444; border: 1px solid #d2d2d2; border-width: 0 1px 1px 0; }
.prop-h span:first-child, .prop-r span:first-child { width: 101px; }
.prop-h span:last-child, .prop-r span:last-child { width: 139px; }
.prop-r { display: flex; height: 21px; }
.prop-r span { border: 1px solid #c8c8c8; border-width: 0 1px 1px 0; }
.prop-r span:first-child { border-left: 1px solid #c8c8c8; }
.prop-r span:last-child { background: #ebebeb; }

/* canvas */
.canvas { width: 1103px; margin-left: 3px; background: #000; flex: none; position: relative; overflow: hidden; }
.cad { shape-rendering: crispEdges; }
.cad path, .cad circle, .cad ellipse { fill: none; stroke-width: 1; }
.g { stroke: #0f0; } .r { stroke: #f00; } .y { stroke: #ff0; } .w { stroke: #fff; } .c { stroke: #0ff; } .m { stroke: #f0f; } .k { stroke: #b4b4b4; }
.cad .th { stroke-width: 3; }
.cad circle.g { shape-rendering: geometricPrecision; }
.cad .wf { fill: #fff; stroke: none; }
.cad .fg { fill: #0f0; } .cad .fr { fill: #f00; } .cad circle.fb { fill: #0000c0; }
.t text { fill: #fff; font: 12px "Liberation Sans Narrow", "DejaVu Sans Condensed", sans-serif; text-anchor: middle; dominant-baseline: central; }
.ts text { fill: #fff; font: 7px "Liberation Sans Narrow", "Noto Sans CJK SC", sans-serif; text-anchor: middle; dominant-baseline: central; }
.ts .bold { font: bold 9px "Noto Sans CJK SC", sans-serif; }
.bub text { fill: #fff; font: 18px "Liberation Sans Narrow", "DejaVu Sans Condensed", sans-serif; text-anchor: middle; dominant-baseline: central; }
.tt { fill: #fff; font: 12px "Noto Sans CJK SC", sans-serif; text-anchor: middle; dominant-baseline: central; }
.lg, .lr { font: 12px "Liberation Sans", sans-serif; text-anchor: middle; dominant-baseline: central; }
.lg { fill: #0f0; } .lr { fill: #f00; }
.viewtools {
  position: absolute; left: 1071px; top: 0; width: 32px; height: 237px; background: #4b4d51; border-radius: 0 0 4px 4px;
  display: flex; flex-direction: column; align-items: center; padding-top: 14px;
}
.v1 { width: 26px; height: 20px; margin-bottom: 8px; }
.v2 { width: 25px; height: 24px; margin-bottom: 5px; }
.vrot { margin-top: 3px; height: 23px; margin-bottom: 4px; }
.v3d { fill: #24262a; font: 7px "Liberation Sans", sans-serif; text-anchor: middle; }
.vc { border: 3px solid transparent; border-top: 4px solid #24262a; margin-bottom: 3px; width: 0; height: 0; }
.vc-end { margin-bottom: 1px; }
.vdiv { width: 22px; height: 1px; background: #222; margin-bottom: 7px; }
.handle { position: absolute; top: 372px; width: 4px; height: 100px; background: #5f6a74; }
.handle::after { content: ""; position: absolute; top: 46px; border: 4px solid transparent; }
.hl { left: 531px; background: #3c3f44; }
.hl::after { left: -3px; border-right-color: #ddd; }
.hr { left: 1638px; }
.hr::after { left: 0; border-left-color: #ddd; }

/* right */
.right { width: 238px; margin-left: 4px; border-left: 1px solid #c4c4c4; flex: none; display: flex; flex-direction: column; background: #efefef; overflow: hidden; }
.rtitle { height: 21px; line-height: 21px; padding-left: 8px; color: #666; border-bottom: 1px solid #cdcdcd; flex: none; }
.rtabs { height: 34px; display: flex; align-items: flex-end; gap: 3px; padding: 0 0 3px 3px; flex: none; }
.rt { width: 60px; height: 22px; background: #dcdcdc; border-radius: 4px 4px 0 0; display: flex; align-items: center; justify-content: center; color: #555; }
.rt.on { height: 25px; background: #fff; color: #2f82d6; border: 1px solid #cfcfcf; border-bottom: 0; }
.layers { margin-left: 2px; background: #fff; border: 1px solid #c8c8c8; border-width: 1px 0 2px 1px; }
.lh, .lr { display: grid; grid-template-columns: 119px 63px 52px; }
.lh { height: 20px; background: #efefef; }
.lh span { display: flex; align-items: center; justify-content: center; white-space: nowrap; color: #444; border-right: 1px solid #cfcfcf; border-bottom: 1px solid #cfcfcf; overflow: hidden; }
.lh span:last-child { justify-content: flex-start; padding-left: 8px; }
.lr { height: 21px; }
.n { position: relative; display: flex; align-items: center; border-right: 1px solid #c8c8c8; border-bottom: 1px solid #c8c8c8; white-space: nowrap; color: #222; padding-top: 1px; }
.n::before { content: ""; position: absolute; left: 8px; top: 0; bottom: 0; width: 1px; background: #c8c8c8; }
.n.l0::before { display: none; }
.l0 { padding-left: 21px; } .l1 { padding-left: 31px; } .l2 { padding-left: 41px; }
.n .box { top: 3px; left: 2px; width: 14px; height: 14px; z-index: 1; }
.l1 .box { left: 11px; }
.l1::after { content: ""; position: absolute; left: 8px; top: 10px; width: 4px; height: 1px; background: #c8c8c8; }
.l2::after { content: ""; position: absolute; left: 19px; top: 10px; width: 17px; height: 1px; background: #c8c8c8; box-shadow: none; }
.l2 { background: linear-gradient(#c8c8c8, #c8c8c8) 18px 0 / 1px 100% no-repeat; }
.l2.end { background: linear-gradient(#c8c8c8, #c8c8c8) 18px 0 / 1px 11px no-repeat; }
.c { display: flex; align-items: center; justify-content: center; border-right: 1px solid #c8c8c8; border-bottom: 1px solid #c8c8c8; }
.cb { width: 14px; height: 14px; border: 1px solid #8e8e8e; border-radius: 3px; background: #fff; position: relative; }
.cb.dis { background: #efefef; border-color: #c6c6c6; }
.cb.on { background: #5ba4f6; border-color: #5ba4f6; }
.cb.on::after { content: ""; position: absolute; left: 2.500px; top: 3px; width: 7px; height: 4px; border: solid #fff; border-width: 0 0 2px 2px; transform: rotate(-45deg); }
.cb.part { border-color: #5a95d8; background: #fff; }
.cb.part::after { content: ""; position: absolute; inset: 1px; background: #98c4f8; border-radius: 1px; }
.rfoot { flex: 1; position: relative; padding: 7px 0 0 167px; }
.rbtn { display: flex; align-items: center; width: 100px; height: 25px; background: #f4f6f9; border: 1px solid #cfd2d6; border-radius: 4px; padding-left: 8px; color: #555; white-space: nowrap; }

.arrow { position: absolute; left: 120px; top: 333px; z-index: 3; shape-rendering: geometricPrecision; }
```
